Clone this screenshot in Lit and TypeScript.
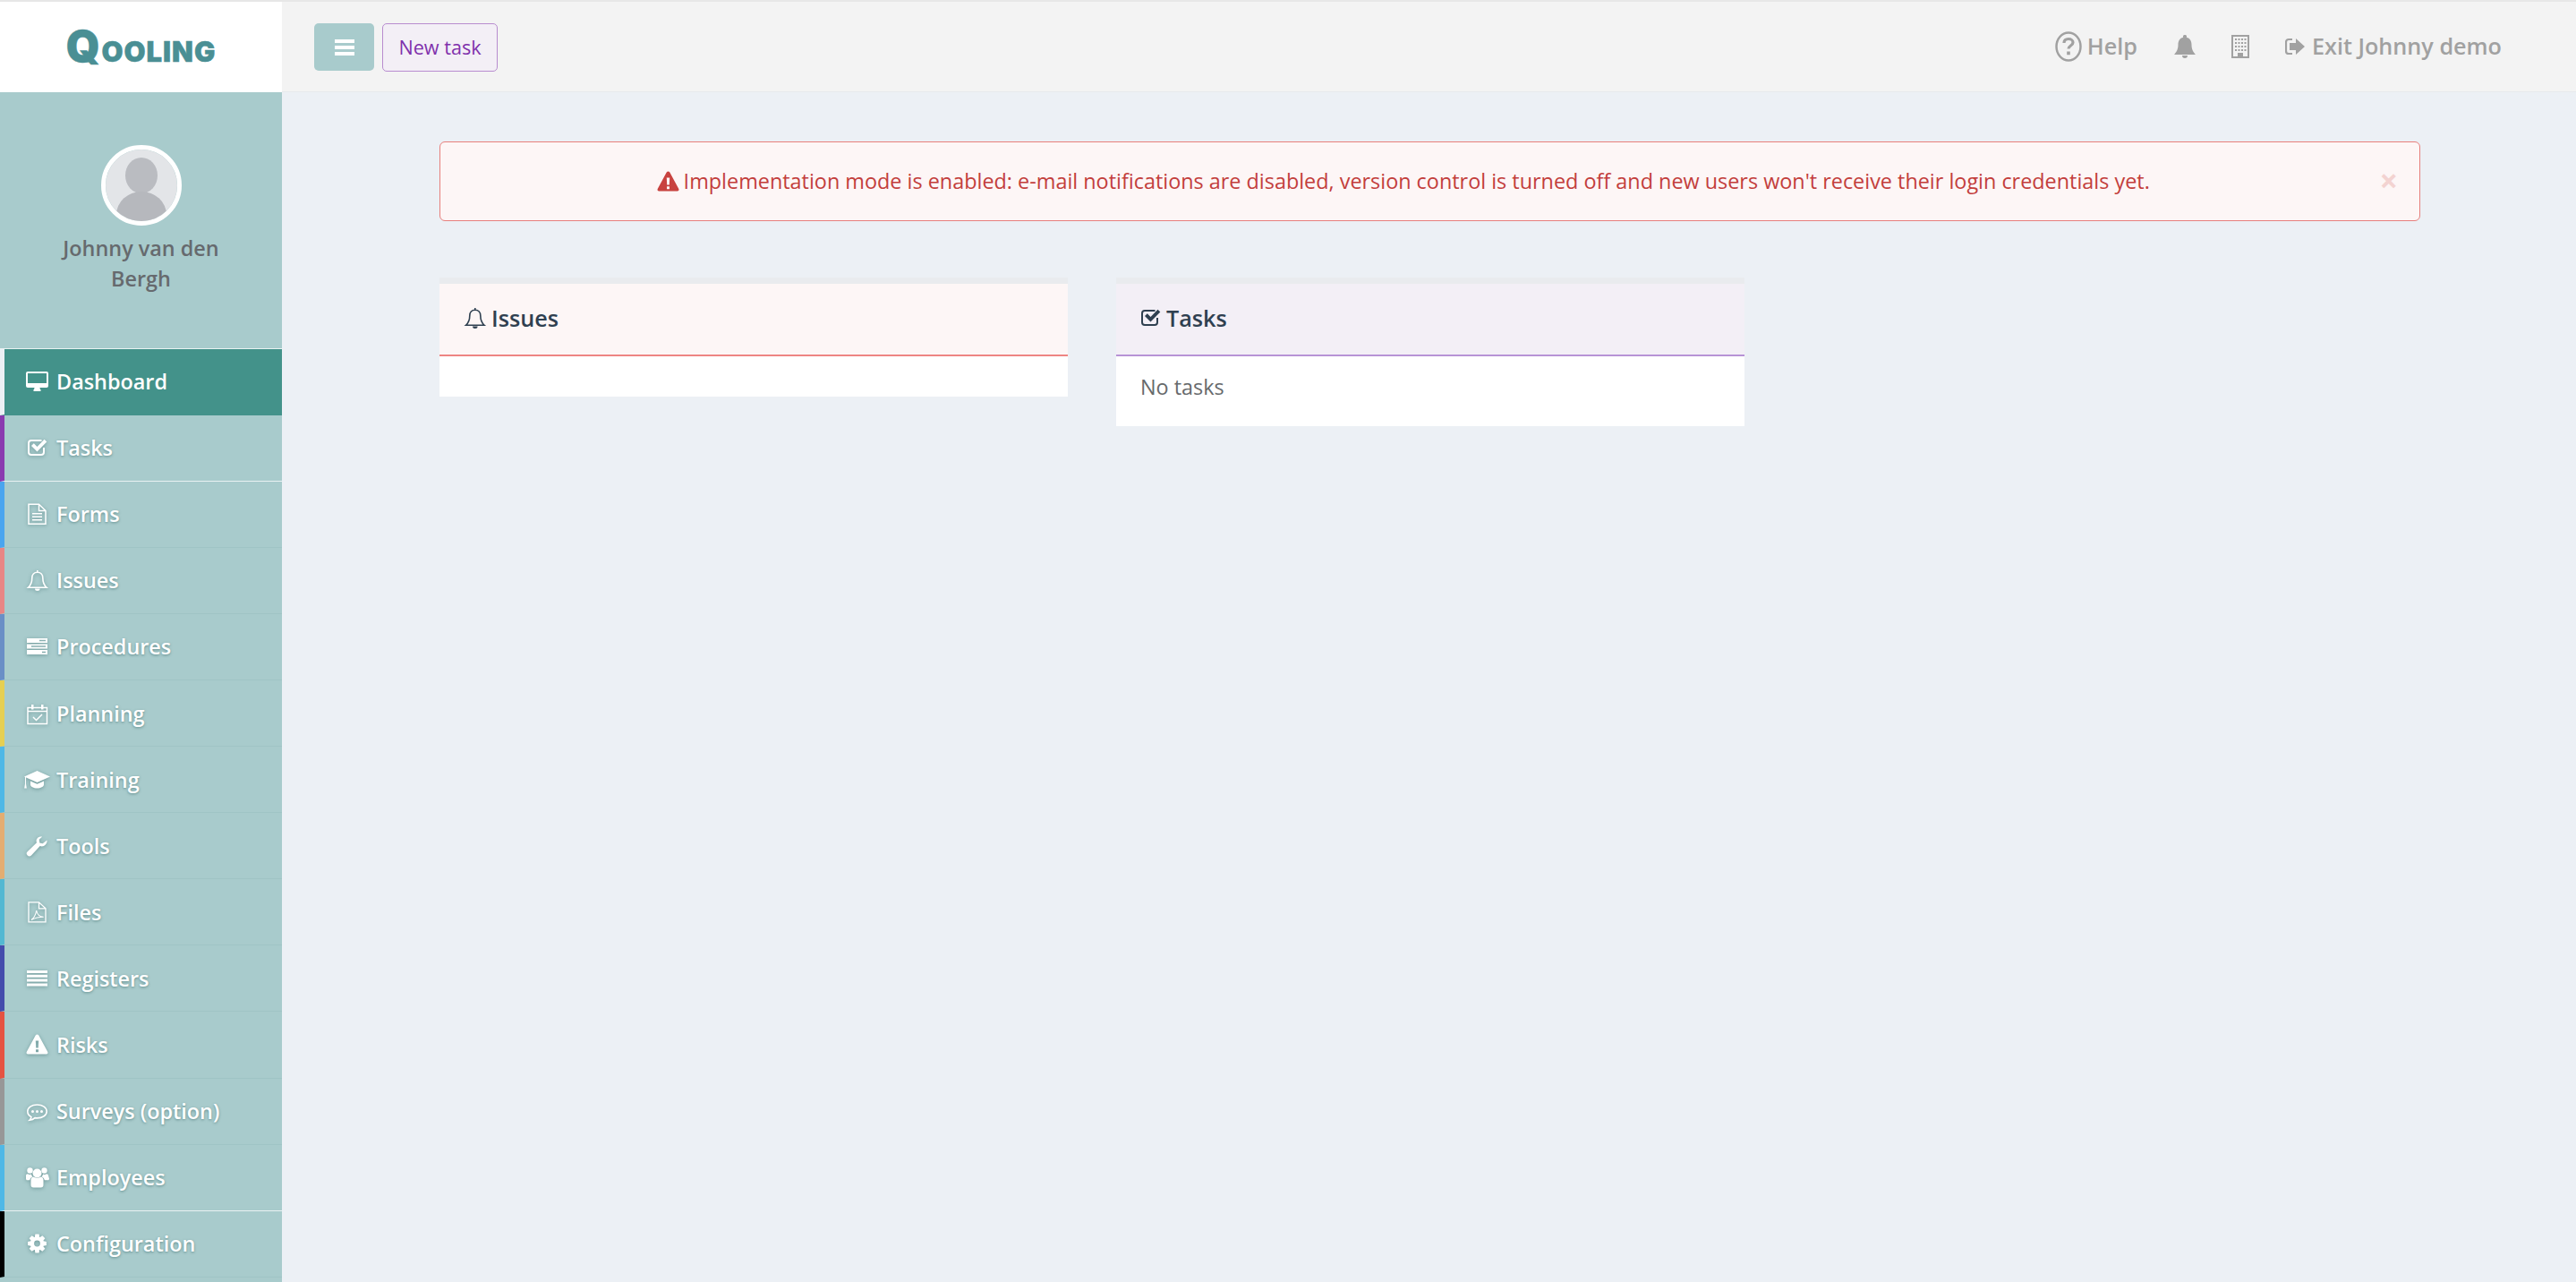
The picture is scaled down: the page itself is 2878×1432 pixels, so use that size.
import { LitElement, html, css, svg } from "lit";
import { customElement } from "lit/decorators.js";

function cogPath() {
  const cx = 12.5, cy = 13, n = 8;
  const pts: string[] = [];
  for (let i = 0; i < n; i++) {
    const a = (i * 2 * Math.PI) / n - Math.PI / 2;
    const t = [[-0.36, 7.6], [-0.2, 10.6], [0.2, 10.6], [0.36, 7.6]];
    for (const [d, r] of t) {
      pts.push(`${(cx + r * Math.cos(a + d)).toFixed(2)} ${(cy + r * Math.sin(a + d)).toFixed(2)}`);
    }
  }
  return `M${pts.join("L")}zM${cx} ${cy - 3.4}a3.4 3.4 0 1 0 0 6.800a3.4 3.4 0 0 0 0-6.800z`;
}

const icons: Record<string, any> = {
  desktop: svg`<path fill-rule="evenodd" d="M2 2h21a2 2 0 0 1 2 2v14a2 2 0 0 1-2 2h-7.500c0 1.200.5 2 1 2.300V24H8.500v-1.700c.5-.3 1-1.100 1-2.300H2a2 2 0 0 1-2-2V4a2 2 0 0 1 2-2zM2 4v11h21V4z"/>`,
  check: svg`<path fill="none" stroke="currentColor" stroke-width="2" d="M20 13v5a3 3 0 0 1-3 3H6a3 3 0 0 1-3-3V8a3 3 0 0 1 3-3h11.500"/><path d="M6 11l2.800-2.800 3.700 3.700L20.500 3.800 23.300 6.600 12.500 17.500z"/>`,
  file: svg`<path fill="none" stroke="currentColor" stroke-width="1.500" d="M3 2.300h11.500L22 9.500v14.700H3zM14.500 2.300v7.200H22"/><path d="M7 12h11v1.400H7zM7 15.500h11v1.400H7zM7 19h11v1.400H7z"/>`,
  bell: svg`<path fill="none" stroke="currentColor" stroke-width="1.600" d="M12.800 4.200c-3.800 0-6 2.800-6 6.300 0 6-1.800 8.500-4.300 10.800h20.600c-2.500-2.300-4.300-4.800-4.300-10.800 0-3.500-2.200-6.300-6-6.300zM12.800 4.200V2"/><path d="M10 22.500h5.600a2.800 2.500 0 0 1-5.600 0z"/>`,
  tasks: svg`<path fill-rule="evenodd" d="M1 4h23v5H1zM15 5.800v1.400h7V5.800zM1 10.500h23v5H1zM6 12.300v1.400h16v-1.400zM1 17h23v5H1zM18 18.800v1.400h4v-1.400z"/>`,
  cal: svg`<path fill="none" stroke="currentColor" stroke-width="1.500" d="M2 6.500h21.500v18H2zM2 10.500h21.500"/><path d="M6 3h2.500v5.500H6zM17 3h2.500v5.500H17z"/><path fill="none" stroke="currentColor" stroke-width="1.500" d="M8 17l3.500 3.500L18 14"/>`,
  cap: svg`<path d="M12.500 3-2 9.500 12.500 16 27 9.500z"/><path d="M5 14.500v4c0 2.200 3.500 4 7.500 4s7.500-1.800 7.500-4v-4l-7.500 3.300z"/><path d="M-1 10v7.500l-.8 5h2.600l-.8-5V10z"/>`,
  wrench: svg`<path d="M23.500 6.500c.5 3.500-2.300 7-5.800 7-.7 0-1.400-.1-2-.4L6 23.500a3 3 0 0 1-4.300 0 3 3 0 0 1 0-4.300l10.300-10c-.3-.7-.4-1.300-.4-2 0-3 2.800-5.400 6.600-4.700l-3.500 3.300.6 3.600 3.400.8z"/>`,
  pdf: svg`<path fill="none" stroke="currentColor" stroke-width="1.300" d="M3 1.800h11.500L22 8.800v15H3zM14.500 1.800v7H22"/><path fill="none" stroke="currentColor" stroke-width="1.100" d="M6 21.500c3-2 5-6.500 5.700-10.500.7 4 3 7 8 7.200-4 0-9.500 1-13.700 3.300z"/>`,
  lines: svg`<path d="M1 4h23v3H1zM1 8.800h23v3H1zM1 13.600h23v3H1zM1 18.400h23v3H1z"/>`,
  warn: svg`<path fill-rule="evenodd" d="M12.500 1.500c.8 0 1.400.4 1.800 1l10 18.500c.6 1.200-.2 2.500-1.600 2.500H2.300C.9 23.500.1 22.200.7 21l10-18.500c.4-.6 1-1 1.800-1zM10.800 8.500l.4 8h2.600l.4-8zM11 18.300v3h3v-3z"/>`,
  comment: svg`<g transform="translate(0 2)"><path fill="none" stroke="currentColor" stroke-width="1.600" d="M12.500 4C6.300 4 1.800 7.200 1.800 11.500c0 2.600 1.700 4.800 4.200 6.200-.2 1.400-1 2.600-2 3.600 2.500-.3 4.600-1.200 6-2.700 1 .2 1.700.3 2.500.3 6.200 0 10.700-3.200 10.700-7.400S18.700 4 12.500 4z"/><circle cx="7.500" cy="11.500" r="1.500"/><circle cx="12.500" cy="11.500" r="1.500"/><circle cx="17.500" cy="11.500" r="1.500"/></g>`,
  users: svg`<circle cx="12.500" cy="8.500" r="5"/><circle cx="4.500" cy="5.500" r="3.200"/><circle cx="20.500" cy="5.500" r="3.200"/><path d="M5.500 15.500c0-1.500 1.500-3 3-3 1 1.500 7 1.500 8 0 1.500 0 3 1.500 3 3v6c0 2-1 3-3 3h-8c-2 0-3-1-3-3z"/><path d="M0 11c0-1 1-1.800 2-1.800 1 1 3 1 4 .3 0 1 .7 2 1.500 2.800-1.500.7-3 2-3.300 4H1.500C.5 16.300 0 15.500 0 14.500zM25 11c0-1-1-1.800-2-1.800-1 1-3 1-4 .3 0 1-.7 2-1.500 2.800 1.500.7 3 2 3.300 4h3.700c1 0 1.500-.8 1.500-1.800z"/>`,
  cog: svg`<path fill-rule="evenodd" d=${cogPath()}/>`,
};

const nav = [
  ["Dashboard", "desktop", "#ecf0f5", "active"],
  ["Tasks", "check", "#8a3ab0", "sep"],
  ["Forms", "file", "#4aa5ef", ""],
  ["Issues", "bell", "#e88685", ""],
  ["Procedures", "tasks", "#6a8fc6", ""],
  ["Planning", "cal", "#e5cf52", ""],
  ["Training", "cap", "#4fb8e6", ""],
  ["Tools", "wrench", "#e3ad72", ""],
  ["Files", "pdf", "#53b8d2", ""],
  ["Registers", "lines", "#444cac", ""],
  ["Risks", "warn", "#e55342", ""],
  ["Surveys (option)", "comment", "#979797", ""],
  ["Employees", "users", "#4fb8e6", "sep"],
  ["Configuration", "cog", "#000000", ""],
];

@customElement("app-root")
export class AppRoot extends LitElement {
  static styles = css`
    :host { display: block; height: 1432px; overflow: hidden; font-family: "Open Sans", sans-serif; background: #ecf0f5; }
    .page { display: grid; grid-template-columns: 315px 1fr; grid-template-rows: 103px 1fr; height: 1432px; }
    .logo { background: #fff; border-top: 2px solid #e7e7e7; display: flex; align-items: center; justify-content: center; color: #4a8f94; font-family: "Inter", sans-serif; font-weight: 900; }
    .logo .l { display: flex; align-items: baseline; gap: 2px; margin-top: -1px; -webkit-text-stroke: .5px #4a8f94; line-height: 1; }
    .logo .q { font-size: 48px; }
    .logo .r { font-size: 31px; letter-spacing: 1px; }
    .top { background: #f3f3f3; border-top: 2px solid #e7e7e7; border-bottom: 1px solid #e7eaec; display: flex; align-items: center; padding: 0 83px 0 36px; }
    .burger { width: 67px; height: 53px; background: #a8cbcc; border-radius: 5px; display: flex; align-items: center; justify-content: center; margin-right: 9px; color: #fff; margin-top: 1px; }
    .burger svg { width: 22px; height: 20px; fill: #fff; display: block; }
    .newtask { height: 54px; margin-top: 1px; box-sizing: border-box; width: 129px; border: 1.500px solid #b88ccf; background: #f3eff6; color: #7f31ac; border-radius: 5px; font-size: 21.600px; display: flex; align-items: center; justify-content: center; font-family: "Open Sans", sans-serif; padding: 0; }
    .spacer { flex: 1; }
    .tl { display: flex; align-items: center; color: #a1a1a1; font-weight: 600; font-size: 25.200px; line-height: 1; }
    .tl svg { display: block; fill: #a1a1a1; }
    .help { margin-right: 41px; gap: 6px; }
    .bellt { margin-right: 40px; }
    .bld { margin-right: 40px; }
    .exit { gap: 8px; }
    .side { background: #a8cbcc; display: flex; flex-direction: column; }
    .prof { height: 286.500px; flex: none; box-sizing: border-box; padding-top: 59px; display: flex; flex-direction: column; align-items: center; border-bottom: 1px solid #e9f2f2; }
    .avatar { width: 90px; height: 90px; box-sizing: border-box; border-radius: 50%; border: 5px solid #fff; display: block; overflow: hidden; flex: none; }
    .name { width: 230px; text-align: center; color: #666a6e; font-size: 23.400px; font-weight: 600; line-height: 34px; margin-top: 8px; }
    .it { height: 74.100px; box-sizing: border-box; border-left: 5px solid; border-bottom: 1px solid #9fc4c5; display: flex; align-items: center; color: #fff; font-size: 23.400px; font-weight: 600; padding-left: 24px; text-shadow: 0 1px 3px rgba(40,90,90,.55); flex: none; }
    .it svg { width: 26px; height: 26px; overflow: visible; fill: currentColor; margin-right: 8px; flex: none; filter: drop-shadow(0 1px 2px rgba(40,90,90,.45)); }
    .it.active { background: #43928a; border-bottom-color: #43928a; text-shadow: none; padding-bottom: 1px; }
    .it.active svg { filter: none; }
    .it.sep { border-bottom-color: #e9f2f2; }
    .main { padding: 55px 174px 0 176px; }
    .alert { height: 89px; box-sizing: border-box; border: 1.500px solid #e77f7c; border-radius: 6px; background: #fdf6f6; color: #c33e3c; font-size: 23.400px; display: flex; align-items: center; padding: 0 24px 2px 0; }
    .msg { flex: 1; display: flex; align-items: center; justify-content: center; gap: 5px; padding-right: 15px; }
    .msg svg { width: 25px; height: 24px; fill: #c8423f; }
    .x { color: #f3d3d1; font-weight: 700; font-size: 36px; line-height: 1; }
    .cards { display: flex; gap: 54px; align-items: flex-start; margin-top: 63px; }
    .card { width: 702px; border-top: 7px solid #e9ebee; background: #fff; }
    .hd { height: 81px; box-sizing: border-box; border-bottom: 2px solid; display: flex; align-items: center; gap: 5px; padding: 0 0 3px 27px; color: #2f4050; font-size: 25.200px; font-weight: 600; }
    .hd svg { width: 26px; height: 26px; fill: #2f4050; color: #2f4050; flex: none; }
    .issues .hd { background: #fdf6f6; border-color: #ee8583; }
    .tasks .hd { background: #f3eff6; border-color: #b793d6; }
    .tasks .hd svg { margin-left: -1px; margin-right: -1px; }
    .bd { height: 45px; }
    .tasks .bd { height: 78px; box-sizing: border-box; padding: 0 0 10px 27px; display: flex; align-items: center; color: #676a6c; font-size: 23.400px; }
  `;

  render() {
    return html`<div class="page">
      <div class="logo"><div class="l"><span class="q">Q</span><span class="r">OOLING</span></div></div>
      <header class="top">
        <div class="burger"><svg viewBox="0 0 22 20"><path d="M0 1h22v4H0zM0 8h22v4H0zM0 15h22v4H0z"/></svg></div>
        <button class="newtask">New task</button>
        <div class="spacer"></div>
        <div class="tl help"><svg width="30" height="34" viewBox="0 0 30 34"><ellipse cx="15" cy="17" rx="13.500" ry="15.500" fill="none" stroke="#a1a1a1" stroke-width="2.500"/><path fill="none" stroke="#a1a1a1" stroke-width="3.200" d="M10 13c0-3 2.200-4.500 5-4.500s5 1.700 5 4c0 3.500-5 3.500-5 7"/><path d="M13.200 22.500h3.600v3.700h-3.600z"/></svg>Help</div>
        <div class="tl bellt"><svg width="24" height="27" viewBox="0 0 24 27"><path d="M12 0a1.800 1.800 0 0 1 1.800 2.700C18 3.500 19.500 7 19.500 11c0 5.500 2 8 4.500 11H0c2.500-3 4.500-5.500 4.500-11 0-4 1.500-7.500 5.700-8.300A1.800 1.800 0 0 1 12 0zM9 23h6a3 3 0 0 1-6 0z"/></svg></div>
        <div class="tl bld"><svg width="20" height="26" viewBox="0 0 20 26"><path fill-rule="evenodd" d="M0 0h20v26H0zM2 2v22h5v-4h6v4h5V2z"/><path d="M4 4h2v2H4zM7.500 4h2v2h-2zM11 4h2v2h-2zM14.500 4h2v2h-2zM4 8h2v2H4zM7.500 8h2v2h-2zM11 8h2v2h-2zM14.500 8h2v2h-2zM4 12h2v2H4zM7.500 12h2v2h-2zM11 12h2v2h-2zM14.500 12h2v2h-2zM4 16h2v2H4zM7.500 16h2v2h-2zM11 16h2v2h-2zM14.500 16h2v2h-2z"/></svg></div>
        <div class="tl exit"><svg width="22" height="20" viewBox="0 0 22 20"><path fill="none" stroke="#a1a1a1" stroke-width="2.200" d="M8 2H4a3 3 0 0 0-3 3v10a3 3 0 0 0 3 3h4"/><path d="M12 1l10 9-10 9v-5H5V6h7z"/></svg>Exit Johnny demo</div>
      </header>
      <aside class="side">
        <div class="prof">
          <svg class="avatar" viewBox="0 0 80 80"><rect width="80" height="80" fill="#e3e5e8"/><ellipse cx="40" cy="29" rx="18" ry="20" fill="#babcc1"/><ellipse cx="40" cy="73" rx="28" ry="26" fill="#b6b8bd"/></svg>
          <div class="name">Johnny van den Bergh</div>
        </div>
        ${nav.map(([t, ic, c, k]) => html`<div class="it ${k}" style="border-left-color:${c}"><svg viewBox="0 0 26 26">${icons[ic]}</svg>${t}</div>`)}
      </aside>
      <main class="main">
        <div class="alert"><div class="msg"><svg viewBox="0 0 25 24">${icons.warn}</svg>Implementation mode is enabled: e-mail notifications are disabled, version control is turned off and new users won't receive their login credentials yet.</div><span class="x">×</span></div>
        <div class="cards">
          <section class="card issues"><div class="hd"><svg viewBox="0 0 26 26">${icons.bell}</svg>Issues</div><div class="bd"></div></section>
          <section class="card tasks"><div class="hd"><svg viewBox="0 0 26 26">${icons.check}</svg>Tasks</div><div class="bd">No tasks</div></section>
        </div>
      </main>
    </div>`;
  }
}
